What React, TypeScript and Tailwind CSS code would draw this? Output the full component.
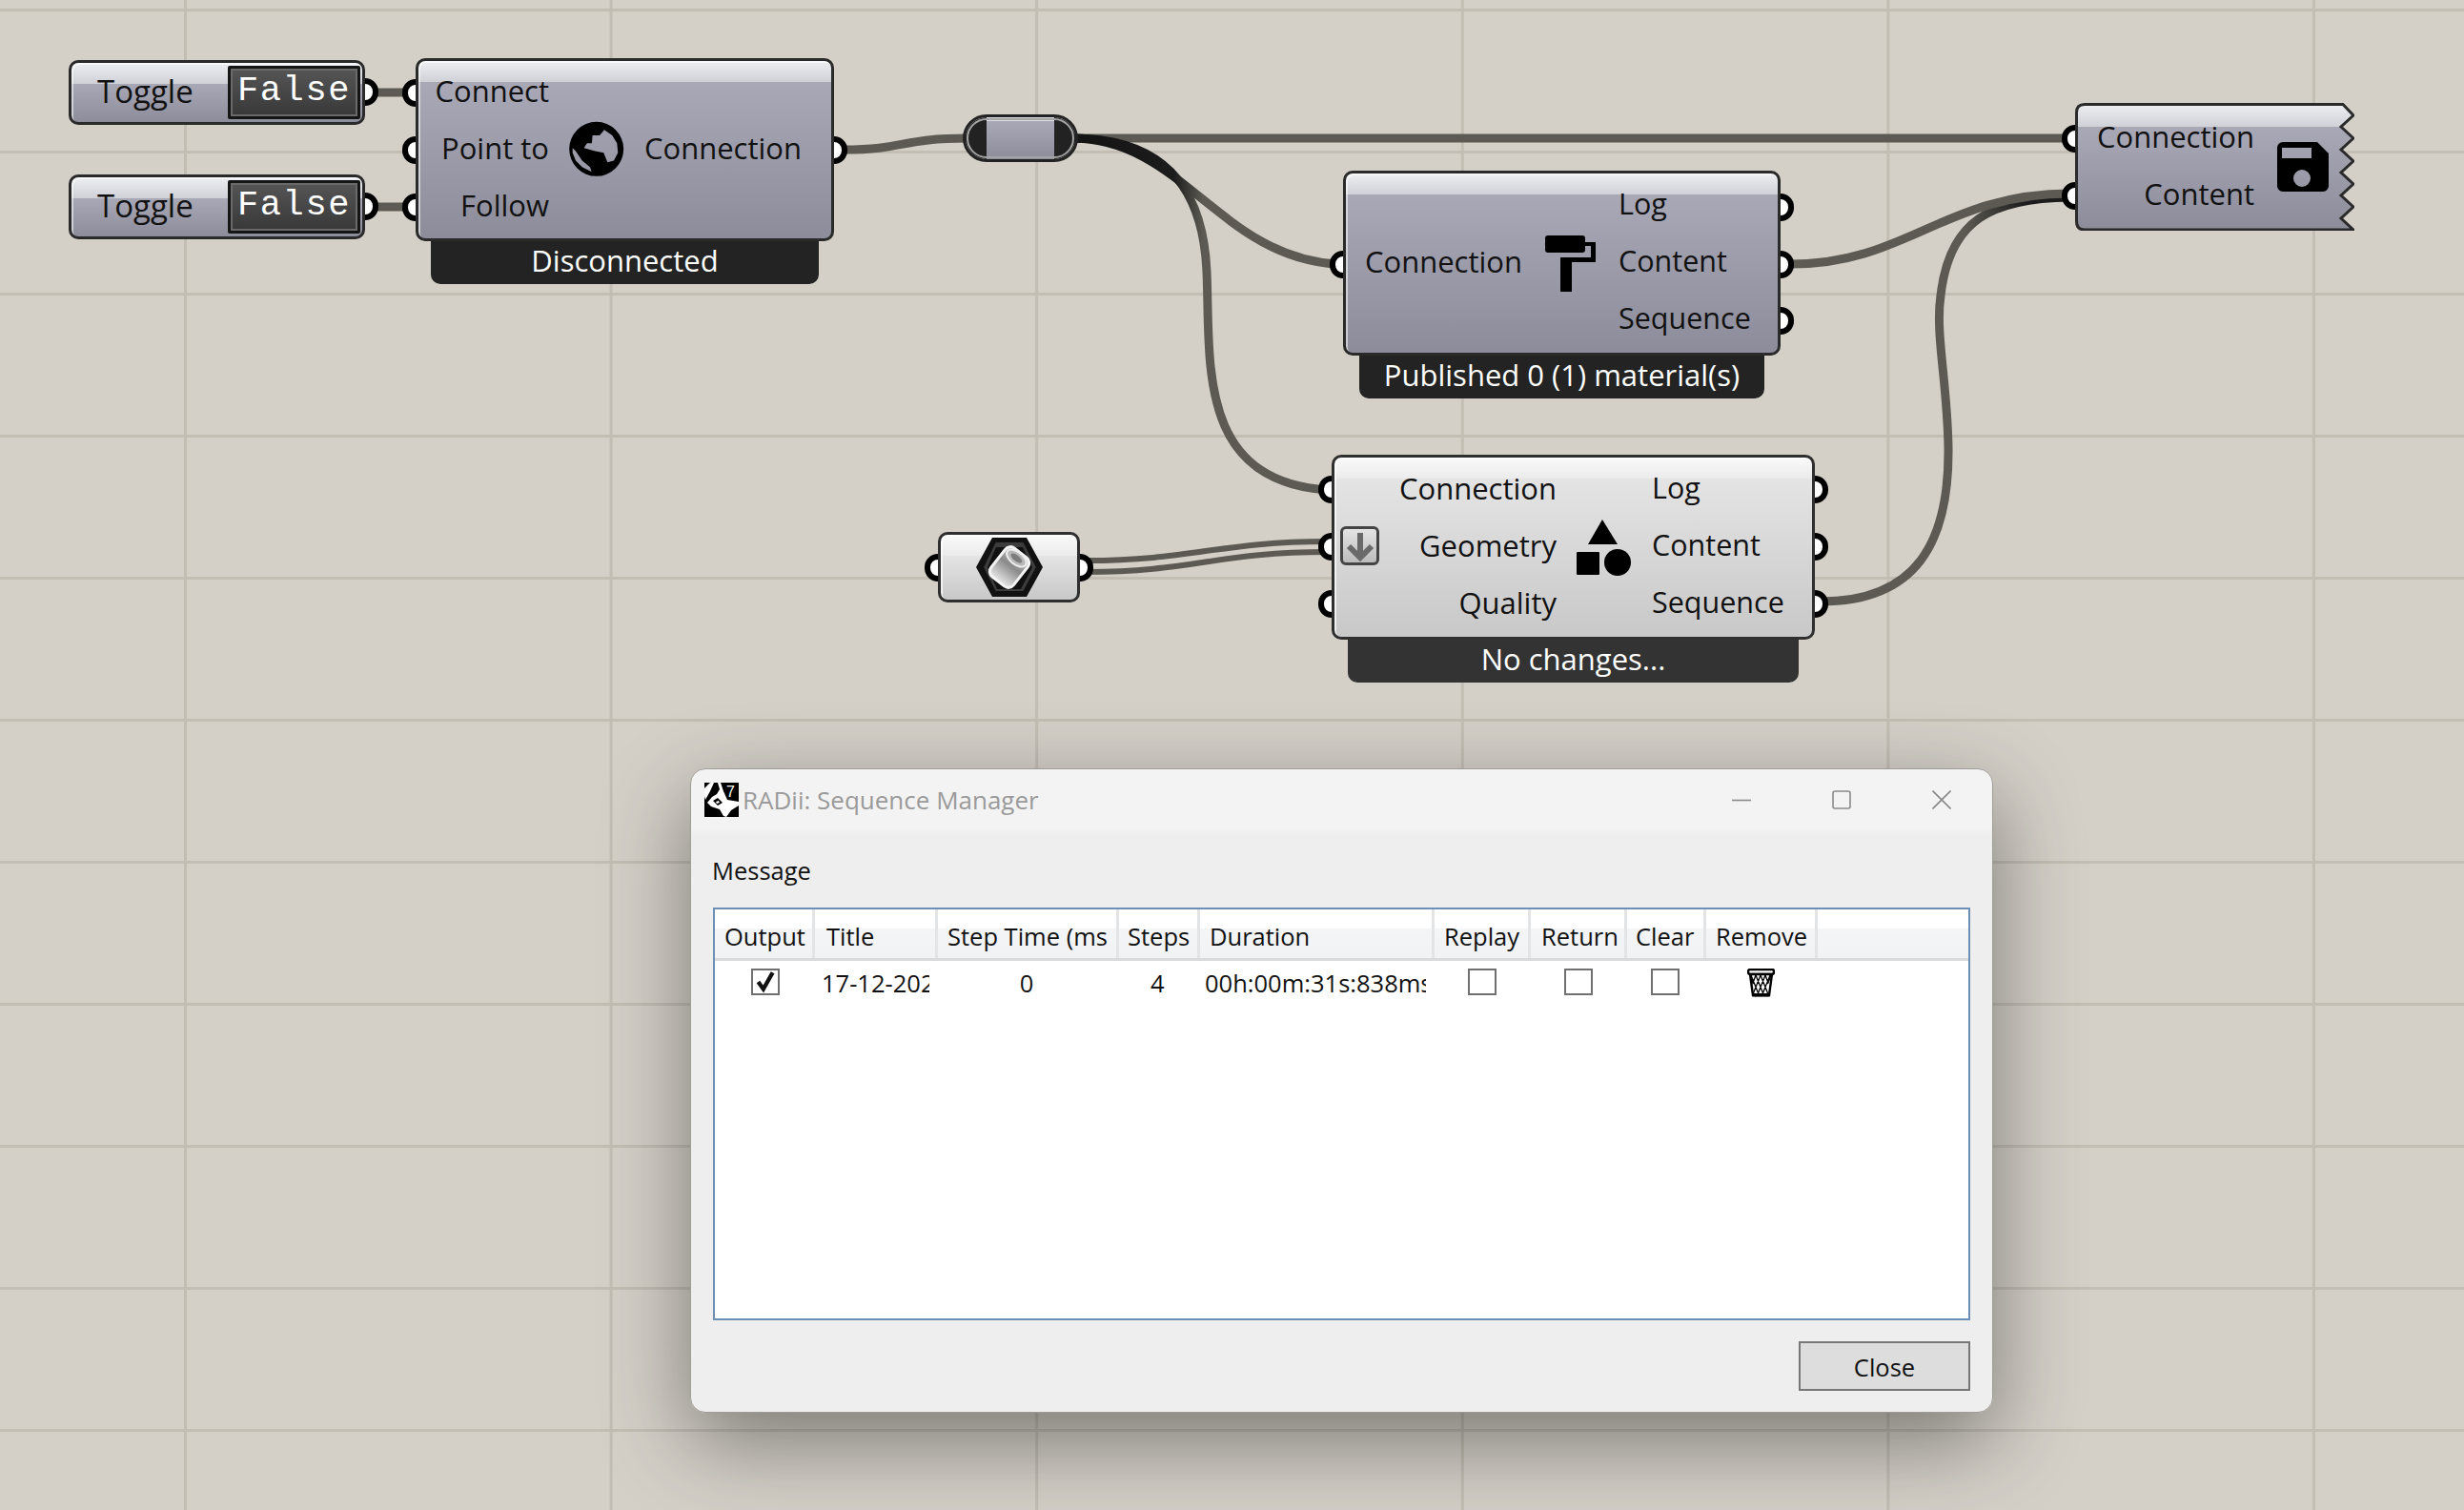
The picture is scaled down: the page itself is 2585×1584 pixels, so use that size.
import React from "react";

const FONT = "font-['Open_Sans','Noto_Sans',sans-serif]";

function Port({ className }: { className: string }) {
  return <div className={`absolute h-[29px] w-[28px] rounded-full border-[6px] border-black bg-white ${className}`} />;
}

function Rows({ labels, className }: { labels: string[]; className: string }) {
  return (
    <div className={`flex flex-col ${className}`}>
      {labels.map((l) => (
        <div key={l} className="flex h-[60px] items-center whitespace-nowrap pb-[4px]">
          {l}
        </div>
      ))}
    </div>
  );
}

function Footer({ text, dark, className }: { text: string; dark?: boolean; className: string }) {
  return (
    <div
      className={`flex h-[45px] items-center justify-center rounded-b-[10px] pb-[5px] text-[31px] text-white ${dark ? "bg-[#232323]" : "bg-[#333333]"} ${className}`}
    >
      {text}
    </div>
  );
}

const GRAY_BODY =
  "rounded-[10px] border-[3px] border-[#2a2a2a] bg-[linear-gradient(to_bottom,#eeeff2_0,#d0d1d7_22px,#a8a8b7_22px,#8c8c9a_100%)] shadow-[inset_2px_2px_0_rgba(255,255,255,0.55)]";
const LIGHT_BODY =
  "rounded-[10px] border-[3px] border-[#2f2f2f] bg-[linear-gradient(to_bottom,#fafafa_0,#ebebeb_22px,#e4e4e4_22px,#c8c8c8_100%)] shadow-[inset_2px_2px_0_rgba(255,255,255,0.7)]";

function Toggle({ className }: { className: string }) {
  return (
    <div className={`absolute h-[68px] w-[311px] ${className}`}>
      <Port className="right-[-14px] top-[19px]" />
      <div className={`relative flex h-full items-center ${GRAY_BODY}`}>
        <span className="ml-[27px] pb-[3px] text-[33px] text-[#111]">Toggle</span>
        <div className="ml-auto mr-[2px] flex h-[56px] w-[139px] items-center justify-center rounded-[2px] border-[3px] border-[#151515] bg-[linear-gradient(to_bottom,#555555,#383838)] pb-[3px] shadow-[inset_0_0_0_2px_#6a6a6a]">
          <span className="font-['Liberation_Mono',monospace] text-[37px] leading-none tracking-[1.6px] text-white">False</span>
        </div>
      </div>
    </div>
  );
}

function Globe() {
  return (
    <svg viewBox="12 10 60 60" className="h-[60px] w-[60px] blur-[0.6px]">
      <path
        fillRule="evenodd"
        fill="#000"
        d="M41.7 10.8a28.5 28.5 0 1 0 0 57a28.5 28.5 0 1 0 0-57ZM50 19.3l8.3 5.7l5 8.3l1 10l-4.3 8.3l-6.7 1.7l-4-10l-9-1.7l-11.7-3.3l3.3-5h5l.7-8.3h7.5ZM16.7 38.3l3.3 3.3l6.7 10l8.3 6.7l1.7 5l-10-5l-6.7-6.7l-3.3-8.3Z"
      />
    </svg>
  );
}

function Roller() {
  return (
    <svg viewBox="0 0 53 59" className="h-[59px] w-[53px] blur-[0.5px]">
      <rect x="0" y="0" width="42" height="18" rx="3" fill="#000" />
      <path d="M42 7h11v21H28v31a2 2 0 0 1-12 0V23h32v-12h-6Z" fill="#000" />
    </svg>
  );
}

function Shapes() {
  return (
    <svg viewBox="0 0 58 59" className="h-[59px] w-[58px] blur-[0.5px]">
      <path d="M27 0L43 26H12Z" fill="#000" />
      <rect x="0" y="34" width="24" height="24" rx="1" fill="#000" />
      <circle cx="43" cy="45" r="14" fill="#000" />
    </svg>
  );
}

function Floppy() {
  return (
    <svg viewBox="0 0 54 52" className="h-[52px] w-[54px] blur-[0.5px]">
      <path
        fillRule="evenodd"
        fill="#000"
        d="M6 0H42L54 12V46A6 6 0 0 1 48 52H6A6 6 0 0 1 0 46V6A6 6 0 0 1 6 0ZM5 6V17H36V6ZM26 29a9 9 0 1 0 0 18a9 9 0 1 0 0-18Z"
      />
    </svg>
  );
}

function HexParam() {
  return (
    <svg viewBox="0 0 70 62" className="h-[62px] w-[70px] blur-[0.4px]">
      <defs>
        <linearGradient id="cyl" x1="0" y1="0" x2="1" y2="0">
          <stop offset="0" stopColor="#e8e8e8" />
          <stop offset="0.55" stopColor="#8a8a8a" />
          <stop offset="1" stopColor="#c8c8c8" />
        </linearGradient>
      </defs>
      <path d="M17 0H53L70 31L53 62H17L0 31Z" fill="#111" />
      <path d="M20 4H50L64 31L50 57H20L7 31Z" fill="#3c3c3c" stroke="#111" strokeWidth="2" />
      <path d="M21 10H49L59 31L47 54H22L12 31Z" fill="#111" />
      <g transform="rotate(-52 35 31)">
        <rect x="16" y="16" width="38" height="30" rx="7" fill="url(#cyl)" stroke="#f4f4f4" strokeWidth="3" />
        <ellipse cx="47" cy="31" rx="6.5" ry="12" fill="#b8b8b8" stroke="#eee" strokeWidth="2" />
        <ellipse cx="47" cy="31" rx="3" ry="7" fill="#7c7c7c" />
      </g>
    </svg>
  );
}

function RhinoLogo() {
  return (
    <svg viewBox="0 0 36 36" className="h-[36px] w-[36px] shrink-0">
      <rect width="36" height="36" fill="#000" />
      <path d="M0 6L6 0H10L6 9L1 18L0 14Z" fill="#fff" />
      <path d="M14 0H17L20 9L24 18L36 20V24L28 29L23 36L20 35L16 28L7 25L3 21L8 15L13 12L16 7Z" fill="#fff" />
      <path d="M9 19L14 16L19 21L14 24Z" fill="#000" />
      <path d="M12 20L15 19L16 21L13 22Z" fill="#fff" />
      <text x="23" y="15" fontSize="16" fill="#fff" fontFamily="'Liberation Sans', sans-serif">7</text>
    </svg>
  );
}

function Trash() {
  return (
    <svg viewBox="0 0 29 30" className="h-[30px] w-[29px]">
      <rect x="1" y="1" width="27" height="5" rx="2" fill="#fff" stroke="#000" strokeWidth="2.4" />
      <path d="M3 6L6 28H23L26 6Z" fill="#fff" stroke="#000" strokeWidth="2.4" />
      <path
        d="M4 7L8 17L12 27M9 7L13 17L17 27M14 7L18 17L22 27M19 7L22 15L25 7M14 7L10 17L6 27M19 7L15 17L11 27M24 7L20 17L16 27M9 7L6 15L4 7"
        stroke="#000"
        strokeWidth="1.3"
        fill="none"
      />
      <rect x="5" y="26" width="19" height="3.5" rx="1.5" fill="#000" />
    </svg>
  );
}

function Check({ checked, className }: { checked?: boolean; className?: string }) {
  return (
    <div className={`flex h-[28px] w-[30px] items-center justify-center border-2 border-[#707070] bg-white ${className ?? ""}`}>
      {checked && (
        <svg viewBox="0 0 24 22" className="h-[24px] w-[26px]">
          <path d="M5 11L10 18L19 2" fill="none" stroke="#111" strokeWidth="4" />
        </svg>
      )}
    </div>
  );
}

const HEADERS: [string, string][] = [
  ["Output", "pl-[10px]"],
  ["Title", "pl-[12px]"],
  ["Step Time (ms", "pl-[10px]"],
  ["Steps", "pl-[9px]"],
  ["Duration", "pl-[10px]"],
  ["Replay", "pl-[10px]"],
  ["Return", "pl-[11px]"],
  ["Clear", "pl-[9px]"],
  ["Remove", "pl-[10px]"],
];

const GRID = "grid grid-cols-[105px_129px_190px_85px_246px_101px_101px_83px_117px_1fr]";

function Dialog() {
  return (
    <div
      className={`absolute left-[724px] top-[806px] flex h-[676px] w-[1367px] flex-col rounded-[16px] border border-[#a09d96] bg-[linear-gradient(to_bottom,#f3f3f3_0,#f3f3f3_60px,#eeeeee_70px,#eeeeee_100%)] shadow-[0_30px_90px_rgba(0,0,0,0.42)] ${FONT}`}
    >
      <div className="flex h-[64px] shrink-0 items-center pl-[14px]">
        <RhinoLogo />
        <span className="ml-[4px] text-[26px] text-[#9a9a9a]">RADii: Sequence Manager</span>
        <div className="ml-auto flex items-center text-[#8a8a8a]">
          <svg viewBox="0 0 20 20" className="mr-[85px] h-[20px] w-[20px]"><path d="M0 10.5H20" stroke="currentColor" strokeWidth="1.6" /></svg>
          <svg viewBox="0 0 20 20" className="mr-[85px] h-[20px] w-[20px]"><rect x="1" y="1" width="18" height="18" rx="2" fill="none" stroke="currentColor" strokeWidth="1.6" /></svg>
          <svg viewBox="0 0 20 20" className="mr-[43px] h-[20px] w-[20px]"><path d="M0.5 0.5L19.5 19.5M19.5 0.5L0.5 19.5" stroke="currentColor" strokeWidth="1.6" /></svg>
        </div>
      </div>

      <div className="mt-[23px] flex h-[38px] shrink-0 items-center pl-[22px] text-[25.5px] text-[#111]">Message</div>

      <div className="mx-[23px] mt-[20px] flex min-h-0 flex-1 flex-col border-2 border-[#6c8fb5] bg-white text-[25.5px] text-[#111]">
        <div className={`${GRID} h-[54px] shrink-0 border-b-[3px] border-[#d9dadc] bg-[linear-gradient(to_bottom,#ffffff_0,#ffffff_40%,#f4f5f7_40%,#f1f2f4_100%)]`}>
          {HEADERS.map(([h, p]) => (
            <div key={h} className={`flex items-center overflow-hidden whitespace-nowrap border-r-[3px] border-[#e3e4e6] pt-[5px] ${p}`}>
              {h}
            </div>
          ))}
          <div />
        </div>
        <div className={`${GRID} h-[46px] items-center`}>
          <div className="flex justify-center pl-[1px]"><Check checked className="mb-[2px]" /></div>
          <div className="w-[120px] overflow-hidden whitespace-nowrap pl-[7px]">17-12-2021</div>
          <div className="pr-[4px] text-center">0</div>
          <div className="pl-[33px]">4</div>
          <div className="ml-[5px] w-[232px] overflow-hidden whitespace-nowrap">00h:00m:31s:838ms</div>
          <div className="pl-[35px]"><Check className="mb-[2px]" /></div>
          <div className="pl-[35px]"><Check className="mb-[2px]" /></div>
          <div className="pl-[25px]"><Check className="mb-[2px]" /></div>
          <div className="pl-[43px]"><Trash /></div>
          <div />
        </div>
      </div>

      <div className="flex shrink-0 justify-end pb-[22px] pr-[23px] pt-[22px]">
        <button className="flex h-[52px] w-[180px] items-center justify-center border-[2px] border-[#777777] bg-[#dddddd] pt-[3px] text-[25.5px] text-[#111]">
          Close
        </button>
      </div>
    </div>
  );
}

export default function App() {
  return (
    <div
      className={`relative h-[1584px] w-[2585px] overflow-hidden bg-[#d4d0c8] bg-[linear-gradient(to_right,#c2beb4_3px,transparent_3px),linear-gradient(to_bottom,#c2beb4_3px,transparent_3px)] bg-[size:446.6px_149px] bg-[position:193px_158px] ${FONT}`}
    >
      <svg className="absolute left-0 top-0 h-[1584px] w-[2585px]" viewBox="0 0 2585 1584">
        <defs>
          <linearGradient id="relayOut" gradientUnits="userSpaceOnUse" x1="1140" y1="0" x2="1262" y2="0">
            <stop offset="0" stopColor="#141414" />
            <stop offset="0.75" stopColor="#1c1c1c" />
            <stop offset="1" stopColor="#5c5a52" />
          </linearGradient>
          <linearGradient id="saveIn" gradientUnits="userSpaceOnUse" x1="2060" y1="0" x2="2125" y2="0">
            <stop offset="0" stopColor="#5c5a52" />
            <stop offset="1" stopColor="#1c1c1c" />
          </linearGradient>
        </defs>
        <g fill="none" stroke="#5c5a52">
          <path d="M390 97H430" strokeWidth="9" />
          <path d="M390 217H430" strokeWidth="9" />
          <path d="M885 157C950 157 945 145 1015 145" strokeWidth="9" />
          <path d="M1125 145H2172" strokeWidth="9" />
          <path d="M1125 145C1240 145 1280 270 1403 277" strokeWidth="9" stroke="url(#relayOut)" />
          <path d="M1125 145C1215 145 1262 190 1266 285C1270 380 1255 505 1393 514" strokeWidth="9" stroke="url(#relayOut)" />
          <path d="M1140 588C1250 588 1280 568 1392 568" strokeWidth="6" />
          <path d="M1140 600C1250 600 1280 579 1392 579" strokeWidth="6" />
          <path d="M1910 631C2010 631 2045 570 2044 470C2043 400 2030 350 2036 310C2045 230 2090 208 2172 207" strokeWidth="9" stroke="url(#saveIn)" />
          <path d="M1880 277C2000 277 2040 203 2172 203" strokeWidth="9" />
        </g>
      </svg>

      <Toggle className="left-[72px] top-[63px]" />
      <Toggle className="left-[72px] top-[183px]" />

      {/* Connect */}
      <div className="absolute left-[436px] top-[61px] w-[439px]">
        <Port className="left-[-14px] top-[22px]" />
        <Port className="left-[-14px] top-[82px]" />
        <Port className="left-[-14px] top-[142px]" />
        <Port className="right-[-14px] top-[82px]" />
        <div className={`relative flex h-[192px] items-center text-[31px] text-[#111] ${GRAY_BODY}`}>
          <Rows labels={["Connect", "Point to", "Follow"]} className="w-[137px] items-end" />
          <div className="flex w-[100px] justify-center"><Globe /></div>
          <Rows labels={["Connection"]} className="" />
        </div>
        <Footer text="Disconnected" dark className="mx-[16px]" />
      </div>

      {/* Publish */}
      <div className="absolute left-[1409px] top-[179px] w-[459px]">
        <Port className="left-[-14px] top-[84px]" />
        <Port className="right-[-14px] top-[24px]" />
        <Port className="right-[-14px] top-[84px]" />
        <Port className="right-[-14px] top-[143px]" />
        <div className={`relative flex h-[194px] items-center text-[31px] text-[#111] ${GRAY_BODY}`}>
          <Rows labels={["Connection"]} className="w-[185px] items-end" />
          <div className="flex w-[101px] justify-center"><Roller /></div>
          <Rows labels={["Log", "Content", "Sequence"]} className="text-[30.5px]" />
        </div>
        <Footer text="Published 0 (1) material(s)" dark className="mx-[17px]" />
      </div>

      {/* Sequence */}
      <div className="absolute left-[1397px] top-[477px] w-[507px]">
        <Port className="left-[-14px] top-[22px]" />
        <Port className="left-[-14px] top-[82px]" />
        <Port className="left-[-14px] top-[142px]" />
        <Port className="right-[-14px] top-[22px]" />
        <Port className="right-[-14px] top-[82px]" />
        <Port className="right-[-14px] top-[142px]" />
        <div className={`relative flex h-[194px] items-center text-[31px] text-[#111] ${LIGHT_BODY}`}>
          <Rows labels={["Connection", "Geometry", "Quality"]} className="w-[233px] items-end" />
          <div className="flex w-[100px] justify-center"><Shapes /></div>
          <Rows labels={["Log", "Content", "Sequence"]} className="text-[30.5px]" />
          <div className="absolute left-[6px] top-[72px] flex h-[41px] w-[41px] items-center justify-center rounded-[6px] border-[3px] border-[#444] bg-[linear-gradient(to_bottom,#e4e4e4,#bcbcbc)]">
            <svg viewBox="0 0 30 32" className="h-[32px] w-[30px]">
              <path d="M15 2V28M3 16L15 28L27 16" fill="none" stroke="#6a6a6a" strokeWidth="6" />
            </svg>
          </div>
        </div>
        <Footer text="No changes..." className="mx-[17px]" />
      </div>

      {/* Save */}
      <div className="absolute left-[2177px] top-[108px] h-[134px] w-[293px]">
        <Port className="left-[-14px] top-[23px]" />
        <Port className="left-[-14px] top-[83px]" />
        <svg viewBox="0 0 293 134" className="absolute inset-0 h-[134px] w-[293px]">
          <defs>
            <linearGradient id="saveBody" x1="0" y1="0" x2="0" y2="1">
              <stop offset="0" stopColor="#eeeff2" />
              <stop offset="0.18" stopColor="#d0d1d7" />
              <stop offset="0.18" stopColor="#a8a8b7" />
              <stop offset="1" stopColor="#8c8c9a" />
            </linearGradient>
          </defs>
          <path
            d="M10 1.5H281L292 13L279 25L292 37L279 49L292 61L279 73L292 85L279 97L292 109L279 121L292 133H10Q1.5 133 1.5 124V10Q1.5 1.5 10 1.5Z"
            fill="url(#saveBody)"
            stroke="#2a2a2a"
            strokeWidth="3"
          />
        </svg>
        <div className="relative flex h-full items-center text-[31px] text-[#111]">
          <Rows labels={["Connection", "Content"]} className="w-[188px] items-end" />
          <div className="flex w-[102px] justify-center"><Floppy /></div>
        </div>
      </div>

      {/* Relay */}
      <div className="absolute left-[1010px] top-[120px] flex h-[50px] w-[121px] overflow-hidden rounded-full border-[3px] border-[#222]">
        <div className="w-[22px] bg-[#222]" />
        <div className="flex-1 bg-[linear-gradient(to_bottom,#dcdce4_0,#dcdce4_4px,#a8a8b7_4px,#8c8c9a_100%)]" />
        <div className="w-[22px] bg-[#222]" />
        <div className="absolute inset-[1px] rounded-full border-2 border-[#a4a4a4]" />
      </div>

      {/* Geometry param */}
      <div className="absolute left-[984px] top-[558px] h-[74px] w-[149px]">
        <Port className="left-[-14px] top-[23px]" />
        <Port className="right-[-14px] top-[23px]" />
        <div className={`relative flex h-full items-center justify-center ${LIGHT_BODY}`}>
          <HexParam />
        </div>
      </div>

      <Dialog />
    </div>
  );
}
